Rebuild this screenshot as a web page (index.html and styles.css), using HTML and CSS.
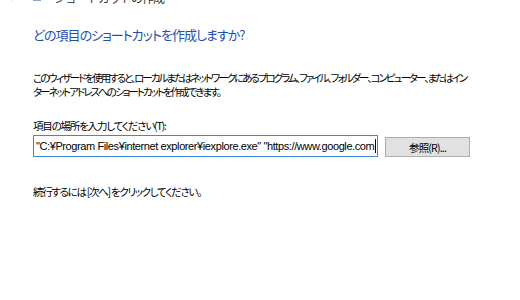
FILE: index.html
```html
<!DOCTYPE html>
<html lang="ja">
<head>
    <meta charset="UTF-8">
    <title>ショートカットの作成</title>
    <link rel="stylesheet" href="styles.css">
</head>
<body>
    <div class="wizard">
        <div class="titlebar">
            <span class="back">&larr;</span>
            <svg class="app-icon" width="8" height="8" viewBox="0 0 8 8"><rect x="0" y="0" width="8" height="8" fill="#8aa4c8"/></svg>
            <span class="title">ショートカットの作成</span>
        </div>

        <h1 class="instruction">どの項目のショートカットを作成しますか?</h1>

        <p class="desc">このウィザードを使用すると、ローカルまたはネットワークにあるプログラム、ファイル、フォルダー、コンピューター、またはイン<br>ターネット アドレスへのショートカットを作成できます。</p>

        <label class="field-label">項目の場所を入力してください(T):</label>
        <div class="field-row">
            <div class="path-input"><span class="path-text">"C:¥Program Files¥internet explorer¥iexplore.exe" "https://www.google.com</span><span class="caret"></span></div>
            <button class="browse">参照(R)...</button>
        </div>

        <p class="hint">続行するには [次へ] をクリックしてください。</p>
    </div>
</body>
</html>
```

FILE: styles.css
```css
* {
    box-sizing: border-box;
    margin: 0;
    padding: 0;
}

body {
    font-family: "Noto Sans CJK JP", "Noto Sans", sans-serif;
    background: #ffffff;
    color: #000000;
    width: 520px;
    height: 300px;
    overflow: hidden;
}

.wizard {
    padding: 0 0 0 33px;
}

.titlebar {
    display: flex;
    align-items: center;
    gap: 8px;
    height: 12px;
    margin-top: -9px;
    margin-left: -24px;
    font-size: 12px;
    color: #333;
}

.titlebar .back {
    color: #bbb;
    width: 14px;
}

.titlebar .app-icon {
    margin-left: 2px;
}

.titlebar .title {
    margin-left: 5px;
    letter-spacing: -1px;
}

.instruction {
    margin-top: 23px;
    font-size: 13px;
    font-weight: normal;
    line-height: 18px;
    color: #2350b4;
    font-feature-settings: "palt";
    letter-spacing: -1px;
    white-space: nowrap;
}

.desc {
    margin-top: 27px;
    font-size: 10.5px;
    line-height: 14px;
    font-feature-settings: "palt";
    letter-spacing: -2px;
    white-space: nowrap;
}

.field-label {
    display: block;
    margin-top: 20px;
    font-size: 10.5px;
    line-height: 14px;
    font-feature-settings: "palt";
    letter-spacing: -1.2px;
}

.field-row {
    display: flex;
    align-items: flex-start;
    gap: 7px;
    margin-top: 2px;
}

.path-input {
    width: 345px;
    height: 22px;
    border: 1px solid #3f86d8;
    padding: 0 0 0 2px;
    display: flex;
    align-items: center;
    overflow: hidden;
    white-space: nowrap;
    font-family: "Liberation Sans", sans-serif;
    font-size: 11px;
    letter-spacing: -0.4px;
}

.caret {
    display: inline-block;
    width: 1px;
    height: 14px;
    background: #000;
    margin-left: 1px;
    flex-shrink: 0;
}

.browse {
    margin-top: 2px;
    width: 85px;
    height: 20px;
    background: #e1e1e1;
    border: 1px solid #adadad;
    font-family: "Noto Sans CJK JP", sans-serif;
    font-size: 10.5px;
    letter-spacing: -0.8px;
    color: #000;
}

.hint {
    margin-top: 28px;
    font-size: 10.5px;
    line-height: 14px;
    font-feature-settings: "palt";
    letter-spacing: -1.3px;
}
```
